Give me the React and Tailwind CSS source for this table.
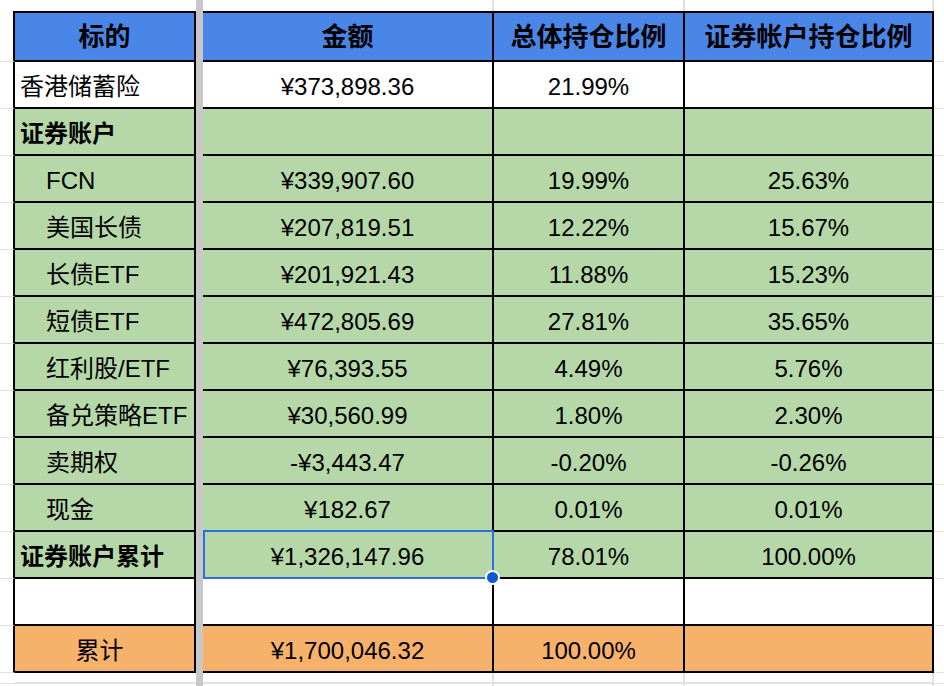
import React from 'react';

const GREEN = 'bg-[#b6d7a8]';
const WHITE = 'bg-white';
const ORANGE = 'bg-[#f6b26b]';

const rows = [
  { label: '香港储蓄险', v: ['¥373,898.36', '21.99%', ''], bg: WHITE },
  { label: '证券账户', bold: true, v: ['', '', ''], bg: GREEN },
  { label: 'FCN', indent: true, v: ['¥339,907.60', '19.99%', '25.63%'], bg: GREEN },
  { label: '美国长债', indent: true, v: ['¥207,819.51', '12.22%', '15.67%'], bg: GREEN },
  { label: '长债ETF', indent: true, v: ['¥201,921.43', '11.88%', '15.23%'], bg: GREEN },
  { label: '短债ETF', indent: true, v: ['¥472,805.69', '27.81%', '35.65%'], bg: GREEN },
  { label: '红利股/ETF', indent: true, v: ['¥76,393.55', '4.49%', '5.76%'], bg: GREEN },
  { label: '备兑策略ETF', indent: true, v: ['¥30,560.99', '1.80%', '2.30%'], bg: GREEN },
  { label: '卖期权', indent: true, v: ['-¥3,443.47', '-0.20%', '-0.26%'], bg: GREEN },
  { label: '现金', indent: true, v: ['¥182.67', '0.01%', '0.01%'], bg: GREEN },
  { label: '证券账户累计', bold: true, v: ['¥1,326,147.96', '78.01%', '100.00%'], bg: GREEN, selected: true },
  { label: '', v: ['', '', ''], bg: WHITE },
  { label: '累计', center: true, v: ['¥1,700,046.32', '100.00%', ''], bg: ORANGE },
];

const headers = ['金额', '总体持仓比例', '证券帐户持仓比例'];

function Divider() {
  return <div className="bg-[#c8c8c8]" />;
}

export default function App() {
  return (
    <div className="w-[944px] h-[686px] overflow-hidden bg-white text-black font-['Liberation_Sans','Noto_Sans_CJK_SC',sans-serif]">
      <div className="grid h-full grid-cols-[15px_181px_7px_291px_191px_249px_10px] grid-rows-[13px_49px_repeat(13,47px)_11px_1fr]">
        {/* top strip */}
        <div className="flex items-end justify-end">
          <div className="w-[2px] h-[2px] bg-black" />
        </div>
        <div className="border-b-2 border-black" />
        <Divider />
        <div className="border-b-2 border-black shadow-[inset_-2px_0_0_#e2e2e2]" />
        <div className="border-b-2 border-black shadow-[inset_-2px_0_0_#e2e2e2]" />
        <div className="border-b-2 border-black shadow-[inset_-2px_0_0_#e2e2e2]" />
        <div />

        {/* header */}
        <div className="border-r-2 border-r-black border-b border-b-[#e2e2e2]" />
        <div className="flex items-center justify-center border-r-2 border-b-2 border-black bg-[#4a86e8] text-[26px] leading-[28px] font-bold">
          标的
        </div>
        <Divider />
        {headers.map((h) => (
          <div
            key={h}
            className="flex items-center justify-center border-r-2 border-b-2 border-black bg-[#4a86e8] text-[26px] leading-[28px] font-bold"
          >
            {h}
          </div>
        ))}
        <div className="border-b border-[#e2e2e2]" />

        {/* data rows */}
        {rows.map((r, i) => (
          <React.Fragment key={i}>
            <div className="border-r-2 border-r-black border-b border-b-[#e2e2e2]" />
            <div
              className={`flex items-center border-r-2 border-b-2 border-black pt-[4px] text-[24px] leading-[28px] whitespace-nowrap ${r.bg} ${
                r.bold ? 'font-bold pl-[5px]' : r.center ? 'justify-center pr-[10px]' : r.indent ? 'pl-[31px]' : 'pl-[5px]'
              }`}
            >
              {r.label}
            </div>
            <Divider />
            {r.v.map((val, j) => (
              <div
                key={j}
                className={`flex items-center justify-center border-r-2 border-b-2 border-black pt-[4px] text-[24px] leading-[28px] whitespace-nowrap ${r.bg} ${
                  r.selected && j === 0 ? 'relative' : ''
                }`}
              >
                {val}
                {r.selected && j === 0 && (
                  <div className="absolute left-0 top-[-2px] right-[-2px] bottom-[-2px] border-2 border-[#2a6fe3]">
                    <div className="absolute right-[-8px] bottom-[-8px] w-[15px] h-[15px] rounded-full bg-[#0b57d0] border-2 border-white" />
                  </div>
                )}
              </div>
            ))}
            <div className="border-b border-[#e2e2e2]" />
          </React.Fragment>
        ))}

        {/* bottom strip */}
        <div className="border-b border-[#e2e2e2]" />
        <div className="border-b-2 border-[#e2e2e2]" />
        <Divider />
        <div className="border-r-2 border-b-2 border-[#e2e2e2]" />
        <div className="border-r-2 border-b-2 border-[#e2e2e2]" />
        <div className="border-r-2 border-b-2 border-[#e2e2e2]" />
        <div className="border-b border-[#e2e2e2]" />

        <div />
        <div />
        <Divider />
        <div className="border-r-2 border-[#e2e2e2]" />
        <div className="border-r-2 border-[#e2e2e2]" />
        <div className="border-r-2 border-[#e2e2e2]" />
        <div />
      </div>
    </div>
  );
}
